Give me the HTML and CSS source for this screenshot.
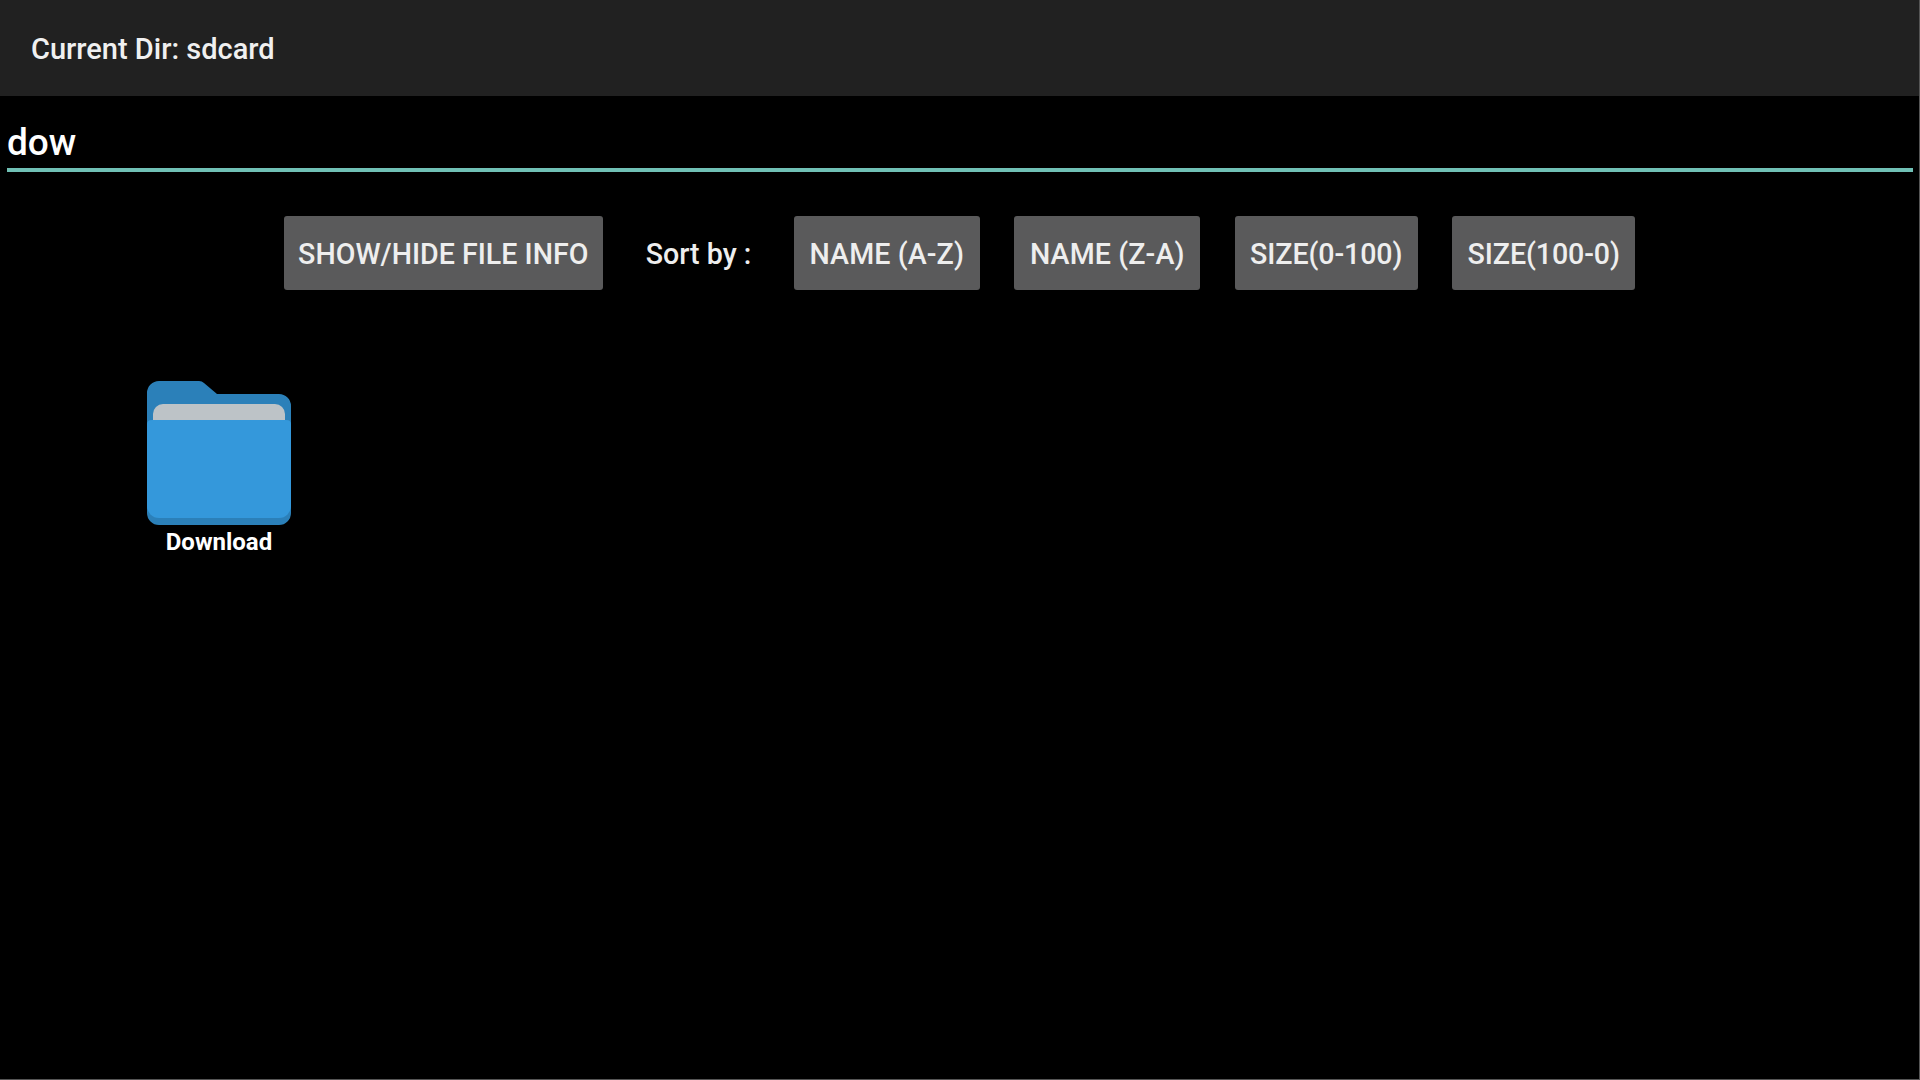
FILE: index.html
```html
<!DOCTYPE html>
<html lang="en">
<head>
<meta charset="utf-8">
<title>Current Dir: sdcard</title>
<link rel="stylesheet" href="styles.css">
</head>
<body>
<header class="titlebar"><span class="title">Current Dir: sdcard</span></header>
<div class="search"><div class="search-text">dow</div></div>
<div class="toolbar">
  <div class="btn btn-info">SHOW/HIDE FILE INFO</div>
  <div class="sort-label">Sort by :</div>
  <div class="btn btn-name">NAME (A-Z)</div>
  <div class="btn btn-name">NAME (Z-A)</div>
  <div class="btn btn-size">SIZE(0-100)</div>
  <div class="btn btn-size">SIZE(100-0)</div>
</div>
<div class="files">
  <div class="file">
    <svg class="folder" viewBox="0 0 144 144" width="144" height="144">
      <path fill="#2b80b9" d="M0 12A12 12 0 0 1 12 0H52Q55 0 57 2L70 13H132A12 12 0 0 1 144 25V132A12 12 0 0 1 132 144H12A12 12 0 0 1 0 132Z"/>
      <path fill="#bdc3c7" d="M6 40V33A10 10 0 0 1 16 23H128A10 10 0 0 1 138 33V40Z"/>
      <path fill="#3498db" d="M0 43Q0 39 5 39H139Q144 39 144 43V125A12 12 0 0 1 132 137H12A12 12 0 0 1 0 125Z"/>
    </svg>
    <div class="file-name">Download</div>
  </div>
</div>
</body>
</html>
```
FILE: styles.css
```css
html {
  height: 100%;
  background: #000;
}
body {
  margin: 0;
  height: 100%;
  box-sizing: border-box;
  border-right: 1px solid #555;
  border-bottom: 1px solid #555;
  background: #000;
  color: #fff;
  font-family: Roboto, "Liberation Sans", sans-serif;
  overflow: hidden;
}
.titlebar {
  height: 96px;
  background: #212121;
  display: flex;
  align-items: center;
  padding-left: 31px;
}
.title {
  font-size: 29px;
  font-weight: 500;
  padding-top: 2px;
  color: #f0f0f0;
}
.search {
  padding: 0 6px 0 7px;
}
.search-text {
  height: 72px;
  line-height: 94px;
  font-size: 37px;
  font-weight: 500;
  border-bottom: 4px solid #70c0b5;
}
.toolbar {
  display: flex;
  justify-content: center;
  align-items: center;
  margin-top: 44px;
}
.btn {
  height: 74px;
  box-sizing: border-box;
  display: flex;
  align-items: center;
  justify-content: center;
  padding-top: 2px;
  background: #5a5a5b;
  border-radius: 3px;
  font-size: 28.6px;
  font-weight: 500;
  color: #eee;
  margin-right: 34.5px;
  white-space: nowrap;
}
.btn:last-child {
  margin-right: 0;
}
.btn-info {
  width: 319px;
  margin-right: 43px;
}
.btn-name {
  width: 186px;
  letter-spacing: 0.1px;
}
.btn-size {
  width: 183px;
  letter-spacing: -0.1px;
}
.sort-label {
  width: 105px;
  padding-top: 2px;
  font-size: 28.6px;
  font-weight: 500;
  color: #eee;
  white-space: nowrap;
  margin-right: 43px;
}
.files {
  padding: 91px 0 0 147px;
}
.file {
  width: 144px;
  display: flex;
  flex-direction: column;
  align-items: center;
}
.folder {
  display: block;
}
.file-name {
  font-size: 24px;
  font-weight: 700;
  margin-top: 3px;
  white-space: nowrap;
}
```
